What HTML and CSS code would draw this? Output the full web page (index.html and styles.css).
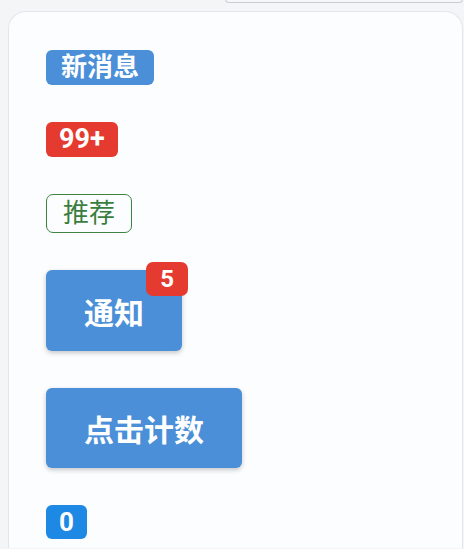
FILE: index.html
```html
<!DOCTYPE html>
<html lang="zh">
<head>
<meta charset="utf-8">
<link rel="stylesheet" href="styles.css">
</head>
<body>
<div class="top-box"></div>
<div class="card">
  <span class="badge badge-blue">新消息</span>
  <span class="badge badge-red">99+</span>
  <span class="badge badge-outline">推荐</span>
  <button class="btn btn-notify">通知<span class="dot-badge">5</span></button>
  <button class="btn">点击计数</button>
  <span class="badge badge-count">0</span>
</div>
</body>
</html>
```
FILE: styles.css
```css
html, body {
  margin: 0;
  padding: 0;
}
body {
  width: 464px;
  height: 549px;
  overflow: hidden;
  background: #f3f5f7;
  font-family: Roboto, "Noto Sans CJK SC", sans-serif;
}
.top-box {
  margin-left: 225px;
  width: 236px;
  height: 3px;
  border: 1px solid #c9cdd1;
  border-top: none;
  border-radius: 0 0 10px 10px;
  background: #f6f7f8;
  margin-top: -1px;
}
.card {
  margin: 8px 0 0 8px;
  width: 455px;
  height: 537px;
  box-sizing: border-box;
  background: #fbfdfe;
  border: 1px solid #e4e7ea;
  border-bottom: none;
  border-radius: 18px 18px 0 0;
  padding: 38px 0 0 37px;
  display: flex;
  flex-direction: column;
  align-items: flex-start;
  gap: 37px;
}
.badge {
  display: inline-block;
  font-size: 26px;
  font-weight: 700;
  line-height: 35px;
  height: 35px;
  padding: 0 13px;
  border-radius: 6px;
  color: #fff;
  white-space: nowrap;
}
.badge-blue {
  background: #4a8fd8;
  padding: 0 15px;
}
.badge-red {
  background: #e53a2f;
  font-size: 27px;
  padding: 0 13px;
}
.badge-outline {
  background: transparent;
  color: #3a7d3e;
  border: 1px solid #3f8343;
  font-weight: 400;
  height: 37px;
  line-height: 37px;
  padding: 0 16px;
  border-radius: 7px;
}
.badge-count {
  background: #1e88e5;
  height: 34px;
  line-height: 34px;
  padding: 0 13px;
  border-radius: 6px;
}
.btn {
  position: relative;
  border: none;
  background: #4a8fd8;
  color: #fff;
  font-family: Roboto, "Noto Sans CJK SC", sans-serif;
  font-size: 30px;
  font-weight: 700;
  height: 80px;
  padding: 0 38px;
  border-radius: 6px;
  box-shadow: 0 2px 5px rgba(0, 0, 0, 0.22);
  margin: 0;
}
.btn-notify {
  height: 81px;
}
.dot-badge {
  position: absolute;
  top: -8px;
  right: -6px;
  background: #e53a2f;
  color: #fff;
  font-size: 24px;
  font-weight: 700;
  line-height: 34px;
  height: 34px;
  padding: 0 14px;
  border-radius: 7px;
}
```
